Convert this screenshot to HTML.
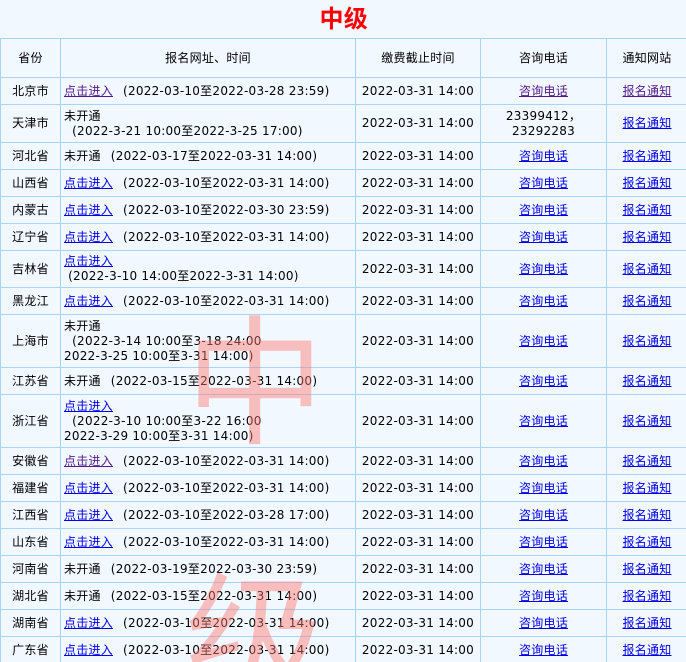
<!DOCTYPE html>
<html><head><meta charset="utf-8"><style>
html,body{margin:0;padding:0;background:#f2f8ff;width:686px;height:662px;overflow:hidden;position:relative}
table{border-collapse:collapse;width:687px;table-layout:fixed;font-family:"DejaVu Sans","Noto Sans CJK SC",sans-serif;font-size:12px;letter-spacing:0.25px;color:#000;position:relative;z-index:1}
td{border:1px solid #a9d4f7;padding:0 3px;line-height:15px;text-align:center}
td.l{text-align:left}
a{color:#0000ee;text-decoration:underline}
a.v{color:#551a8b}
.s{display:inline-block;width:10px}
.t{height:38px;font-size:24px;font-weight:bold;color:#f00;font-family:"Liberation Sans","Noto Sans CJK SC",sans-serif;border-left:none;border-top:none}
.wm{position:absolute;left:185px;font-size:140px;line-height:140px;color:rgba(255,120,110,.45);font-family:"Noto Sans CJK SC",sans-serif;z-index:2;pointer-events:none}
</style></head><body>
<div class="wm" style="top:303px">中</div>
<div class="wm" style="top:560px">级</div>
<table>
<colgroup><col style="width:60px"><col style="width:295px"><col style="width:125px"><col style="width:126px"><col style="width:81px"></colgroup>
<tr><td class="t" colspan="5">中级</td></tr>
<tr style="height:39px"><td>省份</td><td>报名网址、时间</td><td>缴费截止时间</td><td>咨询电话</td><td>通知网站</td></tr>
<tr style="height:27px"><td>北京市</td><td class="l"><a class="v">点击进入</a><span class="s"></span>(2022-03-10至2022-03-28 23:59)</td><td>2022-03-31 14:00</td><td><a class="v">咨询电话</a></td><td><a class="v">报名通知</a></td></tr>
<tr style="height:38px"><td>天津市</td><td class="l">未开通<br>&nbsp;&nbsp;(2022-3-21 10:00至2022-3-25 17:00)</td><td>2022-03-31 14:00</td><td>23399412，<br>23292283</td><td><a>报名通知</a></td></tr>
<tr style="height:27px"><td>河北省</td><td class="l">未开通<span class="s"></span>(2022-03-17至2022-03-31 14:00)</td><td>2022-03-31 14:00</td><td><a>咨询电话</a></td><td><a>报名通知</a></td></tr>
<tr style="height:27px"><td>山西省</td><td class="l"><a>点击进入</a><span class="s"></span>(2022-03-10至2022-03-31 14:00)</td><td>2022-03-31 14:00</td><td><a>咨询电话</a></td><td><a>报名通知</a></td></tr>
<tr style="height:27px"><td>内蒙古</td><td class="l"><a>点击进入</a><span class="s"></span>(2022-03-10至2022-03-30 23:59)</td><td>2022-03-31 14:00</td><td><a>咨询电话</a></td><td><a>报名通知</a></td></tr>
<tr style="height:27px"><td>辽宁省</td><td class="l"><a>点击进入</a><span class="s"></span>(2022-03-10至2022-03-31 14:00)</td><td>2022-03-31 14:00</td><td><a>咨询电话</a></td><td><a>报名通知</a></td></tr>
<tr style="height:37px"><td>吉林省</td><td class="l"><a>点击进入</a><br>&nbsp;(2022-3-10 14:00至2022-3-31 14:00)</td><td>2022-03-31 14:00</td><td><a>咨询电话</a></td><td><a>报名通知</a></td></tr>
<tr style="height:27px"><td>黑龙江</td><td class="l"><a>点击进入</a><span class="s"></span>(2022-03-10至2022-03-31 14:00)</td><td>2022-03-31 14:00</td><td><a>咨询电话</a></td><td><a>报名通知</a></td></tr>
<tr style="height:53px"><td>上海市</td><td class="l">未开通<br>&nbsp;&nbsp;(2022-3-14 10:00至3-18 24:00<br>2022-3-25 10:00至3-31 14:00)</td><td>2022-03-31 14:00</td><td><a>咨询电话</a></td><td><a>报名通知</a></td></tr>
<tr style="height:27px"><td>江苏省</td><td class="l">未开通<span class="s"></span>(2022-03-15至2022-03-31 14:00)</td><td>2022-03-31 14:00</td><td><a>咨询电话</a></td><td><a>报名通知</a></td></tr>
<tr style="height:53px"><td>浙江省</td><td class="l"><a>点击进入</a><br>&nbsp;&nbsp;(2022-3-10 10:00至3-22 16:00<br>2022-3-29 10:00至3-31 14:00)</td><td>2022-03-31 14:00</td><td><a>咨询电话</a></td><td><a>报名通知</a></td></tr>
<tr style="height:27px"><td>安徽省</td><td class="l"><a class="v">点击进入</a><span class="s"></span>(2022-03-10至2022-03-31 14:00)</td><td>2022-03-31 14:00</td><td><a>咨询电话</a></td><td><a>报名通知</a></td></tr>
<tr style="height:27px"><td>福建省</td><td class="l"><a>点击进入</a><span class="s"></span>(2022-03-10至2022-03-31 14:00)</td><td>2022-03-31 14:00</td><td><a>咨询电话</a></td><td><a>报名通知</a></td></tr>
<tr style="height:27px"><td>江西省</td><td class="l"><a>点击进入</a><span class="s"></span>(2022-03-10至2022-03-28 17:00)</td><td>2022-03-31 14:00</td><td><a>咨询电话</a></td><td><a>报名通知</a></td></tr>
<tr style="height:27px"><td>山东省</td><td class="l"><a>点击进入</a><span class="s"></span>(2022-03-10至2022-03-31 14:00)</td><td>2022-03-31 14:00</td><td><a>咨询电话</a></td><td><a>报名通知</a></td></tr>
<tr style="height:27px"><td>河南省</td><td class="l">未开通<span class="s"></span>(2022-03-19至2022-03-30 23:59)</td><td>2022-03-31 14:00</td><td><a>咨询电话</a></td><td><a>报名通知</a></td></tr>
<tr style="height:27px"><td>湖北省</td><td class="l">未开通<span class="s"></span>(2022-03-15至2022-03-31 14:00)</td><td>2022-03-31 14:00</td><td><a>咨询电话</a></td><td><a>报名通知</a></td></tr>
<tr style="height:27px"><td>湖南省</td><td class="l"><a>点击进入</a><span class="s"></span>(2022-03-10至2022-03-31 14:00)</td><td>2022-03-31 14:00</td><td><a>咨询电话</a></td><td><a>报名通知</a></td></tr>
<tr style="height:27px"><td>广东省</td><td class="l"><a>点击进入</a><span class="s"></span>(2022-03-10至2022-03-31 14:00)</td><td>2022-03-31 14:00</td><td><a>咨询电话</a></td><td><a>报名通知</a></td></tr>
</table>
</body></html>
